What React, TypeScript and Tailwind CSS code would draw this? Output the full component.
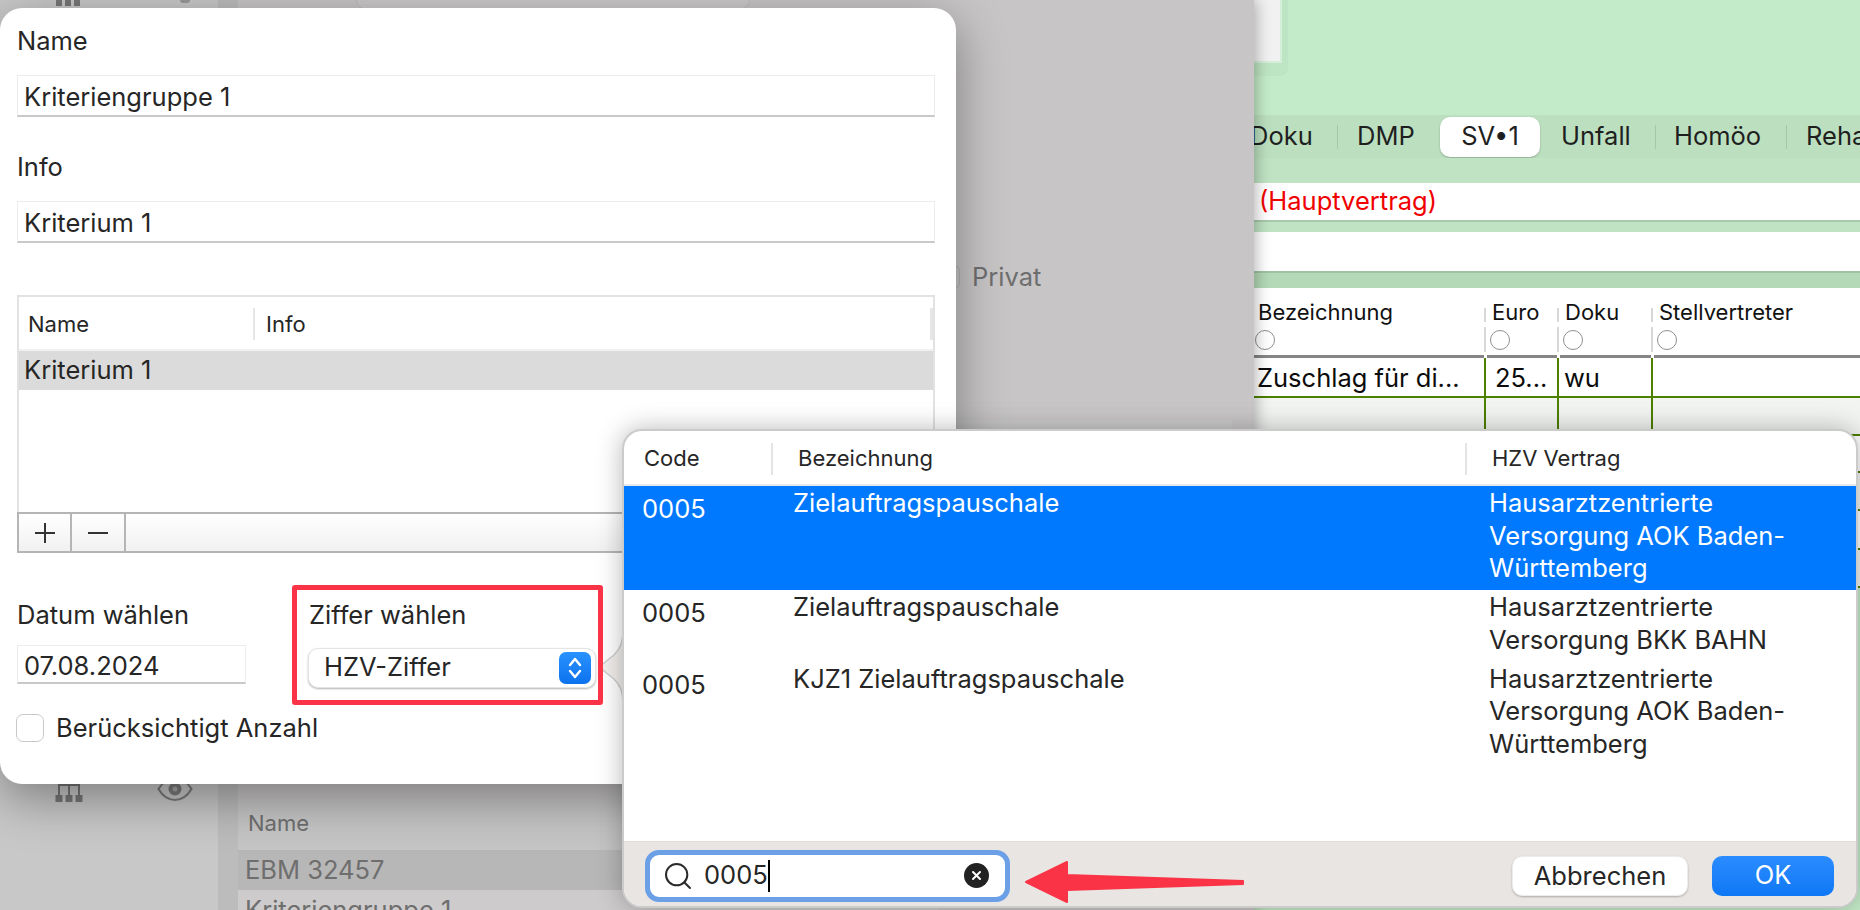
import { Search } from "lucide-react";

const rows = [
  { code: "0005", name: "Zielauftragspauschale", lines: ["Hausarztzentrierte", "Versorgung AOK Baden-", "Württemberg"], selected: true },
  { code: "0005", name: "Zielauftragspauschale", lines: ["Hausarztzentrierte", "Versorgung BKK BAHN"], selected: false },
  { code: "0005", name: "KJZ1 Zielauftragspauschale", lines: ["Hausarztzentrierte", "Versorgung AOK Baden-", "Württemberg"], selected: false },
];

const tableRows = ["h-[38px]", "h-[37px]", "h-[38px]", "h-[39px]", "h-[38px]"];

const TextField = ({ value, className }: { value: string; className: string }) => (
  <div className={`flex items-center pl-[6px] pt-[4px] bg-white border border-[#ececec] border-b-2 border-b-[#c9c9c9] text-[25.5px] text-[#262626] ${className}`}>
    {value}
  </div>
);

const SitemapIcon = () => (
  <svg width="28" height="34" viewBox="0 0 28 34" className="text-[#777]">
    <path d="M14 0v16M4 26v-10h20v10M14 16v10" fill="none" stroke="currentColor" strokeWidth="2" />
    <rect x="0.5" y="26" width="7" height="7" fill="currentColor" />
    <rect x="10.5" y="26" width="7" height="7" fill="currentColor" />
    <rect x="20.5" y="26" width="7" height="7" fill="currentColor" />
  </svg>
);

const EyeIcon = () => (
  <svg width="36" height="26" viewBox="0 0 36 26" className="text-[#7c7c7c]">
    <path d="M1.500 13C6 5.500 11.500 2 18 2s12 3.500 16.500 11C30 20.500 24.500 24 18 24S6 20.500 1.500 13z" fill="none" stroke="currentColor" strokeWidth="2.200" />
    <circle cx="18" cy="13" r="6.500" fill="currentColor" />
    <circle cx="18" cy="13" r="2.500" fill="#a9a9a9" />
  </svg>
);

const LeftBackground = () => (
  <div className="relative w-[1254px] h-full shrink-0 flex overflow-hidden bg-[#c7c5c6] shadow-[2px_0_14px_rgba(0,0,0,0.3)] text-[#6e6e6e]">
    <div className="w-[218px] h-full flex flex-col justify-between bg-[#c9c8c8]">
      <div className="flex pl-[56px] gap-[100px] h-[8px]">
        <div className="flex gap-[3px] h-[6px]">
          <div className="w-[6px] bg-[#777]" />
          <div className="w-[6px] bg-[#777]" />
          <div className="w-[6px] bg-[#777]" />
        </div>
        <div className="w-[10px] h-[3px] rounded-b-full bg-[#999]" />
      </div>
      <div className="flex items-end pl-[55px] gap-[74px] pb-[107px]">
        <SitemapIcon />
        <div className="pb-[1px]">
          <EyeIcon />
        </div>
      </div>
    </div>
    <div className="w-[20px] h-full bg-[#bdbcbc]" />
    <div className="flex-1 h-full flex flex-col">
      <div className="shrink-0 ml-[118px] w-[394px] h-[10px] rounded-b-[10px] bg-[#cbc9ca] border border-t-0 border-[#bdbcbc]" />
      <div className="shrink-0 ml-[716px] mt-[253px] h-[28px] flex items-center gap-[12px] text-[25.5px]">
        <div className="w-[6px] h-[24px] rounded-r-[6px] border border-l-0 border-[#b5b4b4]" />
        <span>Privat</span>
      </div>
      <div className="shrink-0 ml-[699px] mr-[22px] mt-[129px] h-[30px] bg-[#cbcaca]" />
      <div className="shrink-0 mt-[347px] w-[700px] flex flex-col">
        <div className="h-[53px] flex items-center pl-[10px] text-[22px] bg-[#c6c5c5]">Name</div>
        <div className="h-[40px] flex items-center pl-[7px] text-[25.5px] bg-[#b8b7b7]">EBM 32457</div>
        <div className="h-[40px] flex items-center pl-[7px] text-[25.5px] bg-[#cdcbcb]">Kriteriengruppe 1</div>
      </div>
    </div>
  </div>
);

const RightBackground = () => (
  <div className="flex-1 h-full flex flex-col bg-[#c4ebc9] overflow-hidden text-[#1f1f1f]">
    <div className="h-[115px] shrink-0">
      <div className="w-[34px] h-[76px] rounded-br-[8px] bg-[#bee5c3]">
        <div className="w-[28px] h-[63px] bg-[#f1f1f1] border-r-2 border-b-2 border-[#d5eed9]" />
      </div>
    </div>
    <div className="h-[43px] shrink-0 flex items-center bg-[#bce0bf] text-[25.5px] whitespace-nowrap">
      <span className="shrink-0 -ml-[4px] w-[66px]">Doku</span>
      <div className="shrink-0 w-[1px] h-[24px] ml-[21px] bg-[#a5c8a8]" />
      <span className="shrink-0 ml-[19px] w-[56px]">DMP</span>
      <div className="shrink-0 ml-[27px] w-[100px] h-[40px] flex items-center justify-center rounded-[10px] bg-white shadow-[0_1px_2px_rgba(0,0,0,0.25)]">SV•1</div>
      <span className="shrink-0 ml-[21px] w-[68px]">Unfall</span>
      <div className="shrink-0 w-[1px] h-[24px] ml-[26px] bg-[#a5c8a8]" />
      <span className="shrink-0 ml-[18px] w-[87px]">Homöo</span>
      <div className="shrink-0 w-[1px] h-[24px] ml-[25px] bg-[#a5c8a8]" />
      <span className="shrink-0 ml-[19px]">Reha</span>
    </div>
    <div className="h-[25px] shrink-0 bg-[#bfe3c3]" />
    <div className="h-[39px] shrink-0 flex items-center pl-[5px] bg-white border-b-2 border-b-[#a9c9ac] text-[25.5px] text-[#f00000]">(Hauptvertrag)</div>
    <div className="h-[10px] shrink-0 bg-[#bfe3c3]" />
    <div className="h-[41px] shrink-0 bg-white border-b-2 border-b-[#9fc2a3]" />
    <div className="h-[15px] shrink-0 bg-[#b3d9b7]" />
    <div className="grid grid-cols-[230px_73px_94px_1fr] h-[70px] shrink-0 bg-white text-[22px] text-[#111]">
      {["Bezeichnung", "Euro", "Doku", "Stellvertreter"].map((title, i) => (
        <div key={title} className="flex flex-col">
          <div className={`mt-[20px] h-[14px] flex items-center ${i ? "border-l-2 border-[#d8d8d8] pl-[6px]" : "pl-[4px]"}`}>
            <span className="-mt-[6px] whitespace-nowrap">{title}</span>
          </div>
          <div className={`mt-[5px] h-[25px] flex items-center ${i ? "border-l-2 border-[#d8d8d8] pl-[4px]" : ""}`}>
            <div className={`w-[20px] h-[20px] rounded-full border border-[#8f8f8f] ${i ? "" : "ml-[1px]"}`} />
          </div>
          <div className={`mt-[3px] h-[3px] bg-[#858585] ${i ? "ml-[3px]" : ""}`} />
        </div>
      ))}
    </div>
    <div className="grid grid-cols-[230px_73px_94px_1fr] h-[40px] shrink-0 bg-white text-[25.5px] text-[#0c0c0c] border-b-2 border-[#4d7f00]">
      <span className="pl-[3px] leading-[40px] whitespace-nowrap">Zuschlag für di...</span>
      <span className="pl-[9px] leading-[40px] whitespace-nowrap border-l-2 border-[#4d7f00]">25...</span>
      <span className="pl-[5px] leading-[40px] border-l-2 border-[#4d7f00]">wu</span>
      <span className="border-l-2 border-[#4d7f00]" />
    </div>
    {tableRows.map((height, i) => (
      <div key={i} className={`grid grid-cols-[230px_73px_94px_1fr] shrink-0 border-b-2 border-[#4d7f00] ${height} ${i % 2 ? "bg-white" : "bg-[#f2f4f2]"}`}>
        <span />
        <span className="border-l-2 border-[#4d7f00]" />
        <span className="border-l-2 border-[#4d7f00]" />
        <span className="border-l-2 border-[#4d7f00]" />
      </div>
    ))}
  </div>
);

const CriteriaDialog = () => (
  <div className="absolute left-0 top-[8px] w-[956px] h-[776px] flex flex-col px-[17px] pt-[19px] rounded-[22px] bg-white text-[#262626] text-[25.5px] shadow-[0_14px_50px_rgba(0,0,0,0.38)]">
    <label className="h-[28px] leading-[28px]">Name</label>
    <TextField value="Kriteriengruppe 1" className="mt-[20px] h-[42px] w-[918px]" />
    <label className="mt-[36px] h-[28px] leading-[28px]">Info</label>
    <TextField value="Kriterium 1" className="mt-[20px] h-[42px] w-[918px]" />

    <div className="mt-[52px] w-[918px] h-[258px] flex flex-col bg-white border-2 border-[#e2e2e2] border-b-0">
      <div className="h-[54px] shrink-0 flex items-center pt-[2px] text-[22px] border-b-2 border-[#f1f1f1]">
        <div className="w-[236px] h-[32px] flex items-center pl-[9px] border-r-2 border-[#e6e6e6]">Name</div>
        <div className="flex-1 pl-[11px]">Info</div>
        <div className="w-[3px] h-[32px] bg-[#e6e6e6]" />
      </div>
      <div className="h-[39px] shrink-0 flex items-center pl-[5px] bg-[#dbdbdb]">Kriterium 1</div>
      <div className="flex-1" />
      <div className="h-[41px] shrink-0 -mx-[2px] flex bg-gradient-to-b from-white to-[#f1f1f1] border-2 border-[#b5b5b5]">
        <div className="w-[53px] flex items-center justify-center border-r-2 border-[#b5b5b5]">
          <svg width="22" height="22" viewBox="0 0 22 22" stroke="#333" strokeWidth="2"><path d="M11 1v20M1 11h20" /></svg>
        </div>
        <div className="w-[54px] flex items-center justify-center border-r-2 border-[#b5b5b5]">
          <svg width="22" height="22" viewBox="0 0 22 22" stroke="#333" strokeWidth="2"><path d="M1 11h20" /></svg>
        </div>
      </div>
    </div>

    <div className="mt-[32px] h-[120px] flex">
      <div className="w-[229px] flex flex-col">
        <label className="mt-[16px] h-[28px] leading-[28px]">Datum wählen</label>
        <TextField value="07.08.2024" className="mt-[16px] h-[39px]" />
      </div>
      <div className="relative z-20 ml-[46px] w-[311px] flex flex-col pl-[12px] border-[5px] border-[#fb3346] rounded-[3px] bg-white">
        <label className="mt-[11px] h-[28px] leading-[28px]">Ziffer wählen</label>
        <div className="mt-[19px] -ml-[1px] w-[288px] h-[40px] flex items-center justify-between pl-[15px] pr-[4px] rounded-[10px] bg-white border border-[#e4e4e4] shadow-[0_1px_2px_rgba(0,0,0,0.3)]">
          <span className="-mt-[1px]">HZV-Ziffer</span>
          <div className="w-[32px] h-[32px] flex items-center justify-center rounded-[7px] bg-gradient-to-b from-[#2a92ff] to-[#0a72ee]">
            <svg width="18" height="26" viewBox="0 0 18 26" fill="none" stroke="white" strokeWidth="2.400" strokeLinecap="round" strokeLinejoin="round">
              <path d="M4 10l5-6 5 6M4 16l5 6 5-6" />
            </svg>
          </div>
        </div>
      </div>
    </div>

    <div className="mt-[9px] h-[28px] flex items-center gap-[12px]">
      <div className="w-[28px] h-[28px] -ml-[1px] rounded-[7px] bg-white border border-[#c9c9c9]" />
      <span className="leading-[28px]">Berücksichtigt Anzahl</span>
    </div>
  </div>
);

const PickerPopover = () => (
  <div className="absolute left-[622px] top-[429px] z-10 w-[1236px] h-[479px]">
    <svg width="30" height="80" viewBox="0 0 30 80" className="absolute -left-[26px] top-[198px]">
      <path d="M28 2C28 16 24 22 18 28L3 40L18 52C24 58 28 64 28 78Z" fill="#f1eeec" />
      <path d="M27 2C27 16 24 22 18 28L3 40L18 52C24 58 27 64 27 78" fill="none" stroke="#cdcdcd" strokeWidth="1.500" />
    </svg>
    <div className="relative w-full h-full flex flex-col overflow-hidden rounded-[20px] bg-white border-2 border-[#cbcbcb] shadow-[0_0_26px_rgba(0,0,0,0.28)] text-[#262626] text-[25.5px]">
      <div className="h-[55px] shrink-0 flex items-center pt-[2px] text-[22px] border-b-2 border-[#e9e9e9]">
        <div className="w-[149px] h-[32px] flex items-center pl-[20px] border-r-2 border-[#e4e4e4]">Code</div>
        <div className="w-[694px] h-[32px] flex items-center pl-[25px] border-r-2 border-[#e4e4e4]">Bezeichnung</div>
        <div className="pl-[25px]">HZV Vertrag</div>
      </div>
      <div className="flex-1 flex flex-col">
        {rows.map((row, i) => (
          <div key={i} className={`flex pb-[5.5px] ${row.selected ? "bg-[#0079ff] text-white" : ""}`}>
            <span className="w-[147px] pl-[18px] pt-[7px] leading-[32px]">{row.code}</span>
            <span className="w-[695px] pl-[22px] pt-[1px] leading-[32px]">{row.name}</span>
            <span className="pl-[23px] pt-[1px] leading-[32.500px]">
              {row.lines.map((line) => (
                <div key={line}>{line}</div>
              ))}
            </span>
          </div>
        ))}
      </div>
      <div className="h-[65px] shrink-0 flex items-center pl-[21px] pr-[22px] pt-[3px] bg-[#e9e5e3] border-t border-[#dedbd9]">
        <div className="w-[365px] h-[52px] flex items-center pl-[12px] pr-[16px] rounded-[14px] bg-white border-[5px] border-[#6b9fe6]">
          <Search size={32} strokeWidth={1.500} className="text-[#2a2a2a]" />
          <span className="ml-[10px]">0005</span>
          <div className="w-[2px] h-[32px] bg-black" />
          <div className="ml-auto w-[25px] h-[25px] flex items-center justify-center rounded-full bg-[#222]">
            <svg width="11" height="11" viewBox="0 0 11 11" stroke="white" strokeWidth="2" strokeLinecap="round"><path d="M2 2l7 7M9 2l-7 7" /></svg>
          </div>
        </div>
        <button className="ml-auto w-[176px] h-[40px] rounded-[10px] bg-white border border-[#ececec] shadow-[0_1px_2px_rgba(0,0,0,0.25)]">Abbrechen</button>
        <button className="ml-[24px] w-[122px] h-[40px] rounded-[10px] text-white bg-gradient-to-b from-[#2a8cff] to-[#0e78f5]">OK</button>
      </div>
    </div>
    <svg width="224" height="44" viewBox="0 0 224 44" className="absolute left-[402px] top-[431px]">
      <path d="M2 22L43 2V15L219 21V24L43 30V42Z" fill="#fb3346" stroke="#fb3346" strokeWidth="2" strokeLinejoin="round" />
    </svg>
  </div>
);

export default function App() {
  return (
    <div className="relative w-[1860px] h-[910px] flex overflow-hidden font-[Inter,sans-serif]">
      <LeftBackground />
      <RightBackground />
      <CriteriaDialog />
      <PickerPopover />
    </div>
  );
}
